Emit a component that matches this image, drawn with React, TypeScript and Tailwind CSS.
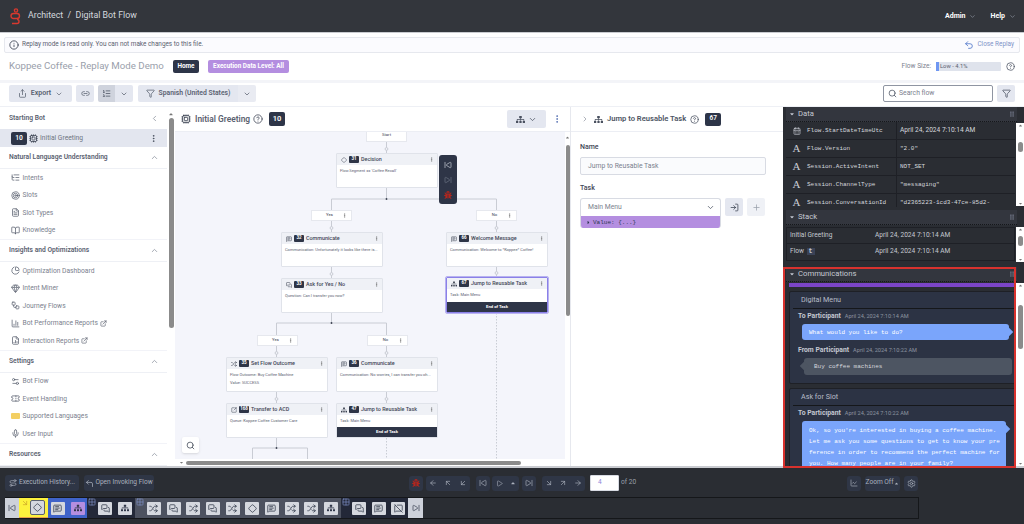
import type { ReactNode } from "react";
import {
  Info, Undo2, Share, Link2, ListOrdered, ChevronDown, ChevronUp, ChevronLeft, ChevronRight,
  Filter, Search, CircleHelp, Cpu, EllipsisVertical, ListTree, Target, FileText, BookOpen,
  ChartPie, Gem, Workflow, ChartColumn, FileChartColumn, Settings2, Ticket, Mic, ExternalLink,
  Diamond, MessageSquareText, MessagesSquare, Shuffle, SquareArrowOutUpRight, ArrowLeft,
  ArrowRight, ArrowUpLeft, ArrowDownLeft, ArrowDownRight, ArrowUpRight, SkipBack, SkipForward,
  Play, Settings, ChartLine, Plus, LogIn, CalendarDays, Grid2x2, CornerUpLeft, Route, MessageSquareOff,
} from "lucide-react";
import { FaSitemap, FaBug, FaCaretDown, FaCaretUp, FaCaretRight, FaGripVertical } from "react-icons/fa";

function Sitemap({ size = 10, className = "" }: { size?: number; className?: string }) {
  return <FaSitemap size={size} className={className} />;
}

function NavItem({ icon, label, ext }: { icon: ReactNode; label: string; ext?: boolean }) {
  return (
    <div className="h-[17.5px] flex items-center pl-[10px] text-[6.7px] text-[#7b818e]">
      <span className="w-[10px] flex justify-center text-[#5b6270]">{icon}</span>
      <span className="ml-[2.5px]">{label}</span>
      {ext && <ExternalLink size={7} className="ml-[2px] text-[#4a5160]" />}
    </div>
  );
}

function NavHead({ label }: { label: string }) {
  return (
    <div className="h-[22px] flex items-center justify-between pl-[9px] pr-[8px] text-[6.7px] font-semibold text-[#5a6170] border-b border-[#eef0f5]">
      {label}
      <ChevronUp size={9} className="text-[#8a909c]" />
    </div>
  );
}

function Sidebar() {
  return (
    <div className="w-[175px] bg-white flex shrink-0 overflow-hidden">
      <div className="w-[167px]">
        <div className="h-[22px] flex items-center justify-between pl-[9px] pr-[8px] text-[6.7px] font-semibold text-[#5a6170]">
          Starting Bot
          <ChevronLeft size={9} className="text-[#8a909c]" />
        </div>
        <div className="h-[18px] bg-[#e3e6ef] flex items-center pl-[11px] pr-[9px] text-[6.7px] text-[#6f7582]">
          <span className="bg-[#2d3548] text-white rounded-[2px] w-[16px] h-[13px] flex items-center justify-center font-semibold">10</span>
          <Cpu size={9} className="ml-[2px] text-[#3a4150]" />
          <span className="ml-[2px] flex-1">Initial Greeting</span>
          <EllipsisVertical size={9} className="text-[#3a4150]" />
        </div>
        <NavHead label="Natural Language Understanding" />
        <NavItem icon={<ListTree size={9} />} label="Intents" />
        <NavItem icon={<Target size={9} />} label="Slots" />
        <NavItem icon={<FileText size={9} />} label="Slot Types" />
        <NavItem icon={<BookOpen size={9} />} label="Knowledge" />
        <div className="h-[1px] bg-[#f2f3f8]" />
        <NavHead label="Insights and Optimizations" />
        <NavItem icon={<ChartPie size={9} />} label="Optimization Dashboard" />
        <NavItem icon={<Gem size={9} />} label="Intent Miner" />
        <NavItem icon={<Workflow size={9} />} label="Journey Flows" />
        <NavItem icon={<ChartColumn size={9} />} label="Bot Performance Reports" ext />
        <NavItem icon={<FileChartColumn size={9} />} label="Interaction Reports" ext />
        <div className="h-[1px] bg-[#f2f3f8]" />
        <NavHead label="Settings" />
        <NavItem icon={<Settings2 size={9} />} label="Bot Flow" />
        <NavItem icon={<Ticket size={9} />} label="Event Handling" />
        <NavItem icon={<span className="block w-[9px] h-[6px] bg-[#f3cf63] rounded-[1px]" />} label="Supported Languages" />
        <NavItem icon={<Mic size={9} />} label="User Input" />
        <div className="h-[1px] bg-[#f2f3f8]" />
        <NavHead label="Resources" />
      </div>
      <div className="w-[8px] flex flex-col items-center pt-[4px]">
        <FaCaretUp size={6} className="text-[#777]" />
        <div className="w-[5px] h-[210px] bg-[#8b8b8b] rounded-full mt-[1px]" />
      </div>
    </div>
  );
}

function Node({ pos, icon, num, title, lines, end, selected }: {
  pos: string; icon: ReactNode; num: string; title: string; lines: string[]; end?: boolean; selected?: boolean;
}) {
  return (
    <div className={`absolute ${pos} w-[102px] h-[35px] bg-white rounded-[1px] flex flex-col overflow-hidden ${selected ? "border border-[#8a80e8] outline outline-[#b8b2f0]" : "border border-[#e0e3ea]"}`}>
      <div className="h-[11px] shrink-0 bg-[#eff1f6] flex items-center px-[3px] text-[#3a4150]">
        <span className="w-[7px] flex justify-center">{icon}</span>
        <span className="ml-[2px] w-[10px] h-[7px] bg-[#2e3547] rounded-[1px] text-white text-[4.5px] font-bold flex items-center justify-center">{num}</span>
        <span className="ml-[2px] flex-1 text-[5.4px] font-medium text-[#3f4656]">{title}</span>
        <EllipsisVertical size={5} className="text-[#555]" />
      </div>
      <div className="flex-1 px-[3px] pt-[1.5px] text-[4px] leading-[8px] text-[#5a6170]">
        {lines.map((l) => <div key={l}>{l}</div>)}
      </div>
      {end && <div className="h-[10px] shrink-0 bg-[#2e3547] text-white text-[4.2px] font-bold flex items-center justify-center">End of Task</div>}
    </div>
  );
}

function Label({ pos, text, dots = true }: { pos: string; text: string; dots?: boolean }) {
  return (
    <div className={`absolute ${pos} w-[41px] h-[11px] bg-white border border-[#e6e8ee] flex items-center justify-center text-[4.2px] text-[#3a4150]`}>
      <span className={dots ? "-ml-[4px]" : ""}>{text}</span>
      {dots && <EllipsisVertical size={5} className="absolute right-[4px] text-[#555]" />}
    </div>
  );
}

function Connectors() {
  return (
    <svg className="absolute left-0 top-0" width="390" height="327" fill="none" stroke="#c9ccd4" strokeWidth="1">
      <path d="M211.5 10V21M211.5 56V67M156.5 100V67H321.5V100M156.5 134V146M321.5 134V145M156.5 180V191M101.5 225V191H211.5V225M101.5 259V271M211.5 259V271M101.5 305V316M77.5 327V316H132.5V327" />
      <path d="M321.5 181V327M211.5 306V327" strokeDasharray="1.5 1.5" />
      <g fill="#3a4150" stroke="none">
        <circle cx="211.5" cy="67" r="0.9" />
        <circle cx="156.5" cy="191" r="0.9" />
        <circle cx="101.5" cy="316" r="0.9" />
      </g>
      <g fill="#f4f5fb">
        <circle cx="211.5" cy="17" r="1.4" />
        <circle cx="156.5" cy="96" r="1.4" />
        <circle cx="321.5" cy="96" r="1.4" />
        <circle cx="156.5" cy="142" r="1.4" />
        <circle cx="321.5" cy="141" r="1.4" />
        <circle cx="101.5" cy="221" r="1.4" />
        <circle cx="211.5" cy="221" r="1.4" />
        <circle cx="101.5" cy="267" r="1.4" />
        <circle cx="211.5" cy="267" r="1.4" />
      </g>
    </svg>
  );
}

function Canvas() {
  return (
    <div className="w-[396px] shrink-0 flex flex-col border-r border-[#e6e8ee]">
      <div className="h-[25px] bg-white flex items-center pl-[6px] pr-[8px] shrink-0 border-b border-[#eceef4]">
        <Cpu size={10} className="text-[#3a4150]" />
        <span className="ml-[4px] text-[8.4px] font-semibold text-[#5a6170]">Initial Greeting</span>
        <CircleHelp size={10} className="ml-[3px] text-[#4a5160]" />
        <span className="ml-[6px] bg-[#2d3548] text-white rounded-[2px] w-[16px] h-[14px] flex items-center justify-center text-[7.5px] font-semibold">10</span>
        <div className="ml-auto w-[39px] h-[18px] bg-[#e4e7f0] rounded-[2px] flex items-center justify-center gap-[3px] text-[#4a5160]">
          <Sitemap size={9} />
          <ChevronDown size={9} />
        </div>
        <EllipsisVertical size={10} className="ml-[6px] text-[#4f6bb0]" />
      </div>
      <div className="flex-1 flex min-h-0">
        <div className="relative w-[390px] bg-[#f4f5fb] overflow-hidden">
          <Connectors />
          <Label pos="left-[191px] -top-[4px] h-[14px]" text="Start" dots={false} />
          <Node pos="left-[161px] top-[21px]" icon={<Diamond size={6} />} num="31" title="Decision" lines={["Flow.Segment == 'Coffee Recall'"]} />
          <Label pos="left-[136px] top-[78px]" text="Yes" />
          <Label pos="left-[301px] top-[78px]" text="No" />
          <Node pos="left-[106px] top-[100px]" icon={<MessageSquareText size={6} />} num="32" title="Communicate" lines={["Communication: Unfortunately it looks like there is..."]} />
          <Node pos="left-[106px] top-[146px]" icon={<MessagesSquare size={6} />} num="33" title="Ask for Yes / No" lines={["Question: Can I transfer you now?"]} />
          <Node pos="left-[271px] top-[100px]" icon={<MessageSquareText size={6} />} num="66" title="Welcome Message" lines={["Communication: Welcome to *Koppee* Coffee!"]} />
          <Node pos="left-[271px] top-[145px] h-[36px]" icon={<Sitemap size={6} />} num="67" title="Jump to Reusable Task" lines={["Task: Main Menu"]} end selected />
          <Label pos="left-[82px] top-[203px]" text="Yes" />
          <Label pos="left-[192px] top-[203px]" text="No" />
          <Node pos="left-[51px] top-[225px]" icon={<Shuffle size={6} />} num="35" title="Set Flow Outcome" lines={["Flow Outcome: Buy Coffee Machine", "Value: SUCCESS"]} />
          <Node pos="left-[161px] top-[225px]" icon={<MessageSquareText size={6} />} num="36" title="Communicate" lines={["Communication: No worries, I can transfer you oh..."]} />
          <Node pos="left-[51px] top-[271px]" icon={<SquareArrowOutUpRight size={6} />} num="168" title="Transfer to ACD" lines={["Queue: Koppee Coffee Customer Care"]} />
          <Node pos="left-[161px] top-[271px]" icon={<Sitemap size={6} />} num="47" title="Jump to Reusable Task" lines={["Task: Main Menu"]} end />
          <div className="absolute left-[264px] top-[23px] w-[18px] h-[49px] bg-[#2e3547] rounded-[3px] flex flex-col items-center justify-around py-[2px]">
            <SkipBack size={8} className="text-[#cfd3dc]" />
            <SkipForward size={8} className="text-[#6e7686]" />
            <FaBug size={8} className="text-[#b3261e]" />
          </div>
          <div className="absolute left-[7px] top-[305px] w-[17px] h-[16px] bg-white rounded-[2px] shadow flex items-center justify-center">
            <Search size={9} className="text-[#3a4150]" />
          </div>
        </div>
        <div className="w-[5px] flex flex-col items-center pt-[3px]">
          <FaCaretUp size={5} className="text-[#777]" />
          <div className="w-[4px] h-[171px] bg-[#8b8b8b] rounded-full mt-[5px]" />
        </div>
      </div>
      <div className="h-[7px] bg-white shrink-0 flex items-center pl-[4px]">
        <FaCaretDown size={5} className="text-[#777]" />
        <div className="w-[335px] h-[4px] bg-[#8b8b8b] rounded-full ml-[2px]" />
      </div>
    </div>
  );
}

function Props() {
  return (
    <div className="w-[212px] shrink-0 bg-white flex flex-col">
      <div className="h-[25px] flex items-center pl-[10px] border-b border-[#eceef4] text-[#4a5160]">
        <ChevronRight size={8} className="text-[#8a909c]" />
        <Sitemap size={9} className="ml-[5px]" />
        <span className="ml-[4px] text-[7.6px] font-semibold text-[#4d5463]">Jump to Reusable Task</span>
        <CircleHelp size={9} className="ml-[4px]" />
        <span className="ml-[6px] bg-[#2d3548] text-white rounded-[2px] w-[16px] h-[13px] flex items-center justify-center text-[6.5px] font-semibold">67</span>
      </div>
      <div className="pl-[9px] pt-[10px] pr-[17px]">
        <div className="text-[7px] font-medium text-[#3f4656] leading-[10px]">Name</div>
        <div className="mt-[5px] h-[18px] border border-[#d8dbe3] rounded-[2px] bg-[#fafbfd] flex items-center pl-[7px] text-[6.8px] text-[#7b818e]">Jump to Reusable Task</div>
        <div className="mt-[8px] text-[7px] font-medium text-[#3f4656] leading-[10px]">Task</div>
        <div className="mt-[5px] flex items-start gap-[4px]">
          <div className="w-[141px] rounded-[3px] overflow-hidden border-t border-x border-[#d8dbe3]">
            <div className="h-[17px] flex items-center justify-between pl-[7px] pr-[5px] text-[6.8px] text-[#7b818e]">
              Main Menu
              <ChevronDown size={9} className="text-[#4a5160]" />
            </div>
            <div className="h-[12px] bg-[#b48ee0] flex items-center pl-[5px] gap-[2px] font-['Liberation_Mono',monospace] text-[6px] text-[#2b3650]">
              <FaCaretRight size={5} />
              Value: {"{...}"}
            </div>
          </div>
          <div className="w-[18px] h-[18px] bg-[#e4e7f0] rounded-[2px] flex items-center justify-center text-[#3a4150]"><LogIn size={9} /></div>
          <div className="w-[18px] h-[18px] bg-[#eff1f6] rounded-[2px] flex items-center justify-center text-[#9aa0ab]"><Plus size={9} /></div>
        </div>
      </div>
    </div>
  );
}

function MiniScroll({ h, top, thumb }: { h: string; top: string; thumb: string }) {
  return (
    <div className={`absolute right-0 ${h} w-[8px] bg-white flex flex-col items-center justify-between`}>
      <FaCaretUp size={5} className="text-[#777]" />
      <div className={`absolute ${top} ${thumb} w-[5px] bg-[#8b8b8b] rounded-full`} />
      <FaCaretDown size={5} className="text-[#777]" />
    </div>
  );
}

function PanelHead({ title }: { title: string }) {
  return (
    <div className="h-[15px] bg-[#33363e] flex items-center pl-[3px] text-[7.7px] text-[#c5c9d2] border-b border-dotted border-[#15171a]">
      <FaCaretDown size={6} className="mr-[3px]" />
      {title}
      <FaGripVertical size={6} className="ml-auto mr-[2px] text-[#6b7080]" />
    </div>
  );
}

function DataRow({ icon, name, value, sans }: { icon: ReactNode; name: string; value: string; sans?: boolean }) {
  return (
    <div className="h-[18px] flex items-center border-b border-[#1e2026] text-[#d5d8de] font-['Liberation_Mono',monospace] text-[6px]">
      <span className="w-[21px] flex justify-center">{icon}</span>
      <span className="w-[90px] border-r border-[#1e2026] h-full flex items-center">{name}</span>
      <span className={`ml-[3px] ${sans ? "font-['Roboto',sans-serif] text-[6.6px]" : ""}`}>{value}</span>
    </div>
  );
}

function LetterA() {
  return <span className="font-['Liberation_Serif',serif] text-[11px] text-[#c8ccd4] font-normal">A</span>;
}

function Bubble({ children, h, from }: { children: ReactNode; h: string; from?: boolean }) {
  return (
    <div className={`relative ${h} font-['Liberation_Mono',monospace] text-[6px] leading-[11px] flex items-center rounded-[3px] ${from ? "bg-[#4d5562] text-[#d5d8de] ml-[14px] mr-[3px] pl-[10px]" : "bg-[#7aa5fb] text-white ml-[12px] mr-[6px] pl-[7px]"}`}>
      <div>{children}</div>
      {from
        ? <span className="absolute -left-[3px] top-[5px] w-[6px] h-[6px] rotate-45 bg-[#4d5562]" />
        : <span className="absolute -right-[3px] top-[5px] w-[6px] h-[6px] rotate-45 bg-[#7aa5fb]" />}
    </div>
  );
}

function MsgHead({ who, time }: { who: string; time: string }) {
  return (
    <div className="h-[15px] pl-[8px] flex items-center gap-[4px]">
      <span className="text-[6.8px] font-bold text-[#c5c9d2]">{who}</span>
      <span className="text-[5.6px] text-[#8d93a0]">{time}</span>
    </div>
  );
}

function RightPanel() {
  return (
    <div className="flex-1 bg-[#2a2d33] flex flex-col relative overflow-hidden pl-[3px]">
      <div className="h-[101px] relative shrink-0">
        <div className="pr-[7px]"><PanelHead title="Data" /></div>
        <div className="pr-[9px] h-[85px] overflow-hidden">
          <DataRow icon={<CalendarDays size={8} className="text-[#c8ccd4]" />} name="Flow.StartDateTimeUtc" value="April 24, 2024 7:10:14 AM" sans />
          <DataRow icon={<LetterA />} name="Flow.Version" value={'"2.0"'} />
          <DataRow icon={<LetterA />} name="Session.ActiveIntent" value="NOT_SET" />
          <DataRow icon={<LetterA />} name="Session.ChannelType" value={'"messaging"'} />
          <DataRow icon={<LetterA />} name="Session.ConversationId" value={'"d2365223-1cd3-47ce-85d2-'} />
        </div>
        <MiniScroll h="top-[16px] h-[83px]" top="top-[19px]" thumb="h-[10px]" />
      </div>
      <div className="h-[56px] relative shrink-0 mt-[2px]">
        <div className="pr-[7px]"><PanelHead title="Stack" /></div>
        <div className="pr-[9px] mt-[2px] text-[6.6px] text-[#c5c9d2]">
          <div className="h-[17px] flex items-center border border-[#1e2026]">
            <span className="w-[88px] pl-[3px]">Initial Greeting</span>
            <span>April 24, 2024 7:10:14 AM</span>
          </div>
          <div className="h-[17px] flex items-center border-x border-b border-[#1e2026]">
            <span className="w-[88px] pl-[3px]">Flow <span className="bg-[#3a4256] px-[2px] ml-[1px] font-['Liberation_Mono',monospace] font-bold">t</span></span>
            <span>April 24, 2024 7:10:14 AM</span>
          </div>
        </div>
        <MiniScroll h="top-[17px] h-[35px]" top="top-[9px]" thumb="h-[10px]" />
      </div>
      <div className="flex-1 relative mt-[1px] min-h-0">
        <div className="pr-[7px]"><PanelHead title="Communications" /></div>
        <div className="ml-[3px] mr-[8px] mt-[1px] h-[4px] bg-[#7b45c7]" />
        <div className="ml-[3px] mr-[8px] mt-[4px] flex flex-col gap-[4px] overflow-hidden h-[200px]">
          <div className="h-[93px] bg-[#2c3344] border border-[#1e2026] rounded-[2px] shrink-0">
            <div className="h-[17px] ml-[3px] pl-[8px] flex items-center text-[7.2px] text-[#b8bdc8] border-b border-[#15171a]">Digital Menu</div>
            <MsgHead who="To Participant" time="April 24, 2024 7:10:14 AM" />
            <Bubble h="h-[16px]">What would you like to do?</Bubble>
            <div className="mt-[3px]"><MsgHead who="From Participant" time="April 24, 2024 7:10:22 AM" /></div>
            <Bubble h="h-[17px]" from>Buy coffee machines</Bubble>
          </div>
          <div className="h-[93px] bg-[#2c3344] border border-[#1e2026] rounded-[2px] shrink-0">
            <div className="h-[17px] ml-[3px] pl-[8px] flex items-center text-[7.2px] text-[#b8bdc8] border-b border-[#15171a]">Ask for Slot</div>
            <MsgHead who="To Participant" time="April 24, 2024 7:10:22 AM" />
            <Bubble h="h-[52px] mr-[9px]">
              Ok, so you're interested in buying a coffee machine.<br />
              Let me ask you some questions to get to know your pre<br />
              ference in order to recommend the perfect machine for<br />
              you. How many people are in your family?
            </Bubble>
          </div>
        </div>
        <MiniScroll h="top-[16px] bottom-0" top="top-[22px]" thumb="h-[44px]" />
      </div>
    </div>
  );
}

function Cell({ active, children }: { active?: boolean; children: ReactNode }) {
  return (
    <div className={`w-[14px] h-[13px] shrink-0 rounded-[1px] flex items-center justify-center text-[#2e3547] ${active ? "bg-[#b48ee0]" : "bg-[#d5d8df]"}`}>
      {children}
    </div>
  );
}

const msg = <MessageSquareText size={9} />;
const ask = <MessagesSquare size={9} />;
const mix = <Shuffle size={9} />;
const task = <Sitemap size={8} />;

function Timeline() {
  return (
    <div className="ml-[5px] w-[914px] h-[22px] flex border border-[#15171a] border-l-0">
      <div className="w-[14px] bg-[#cdd1da] flex items-center justify-center text-[#2e3547]"><SkipBack size={8} /></div>
      <div className="w-[29px] bg-[#fdf23d] border-b border-[#e8a14b] relative flex items-center justify-end pr-[3px]">
        <ArrowDownRight size={8} className="absolute left-[2px] top-[1px] text-[#c9a227]" />
        <div className="w-[15px] h-[15px] bg-[#d5d8df] border border-[#5b6270] rounded-[2px] flex items-center justify-center text-[#2e3547]"><Diamond size={9} /></div>
      </div>
      <div className="w-[39px] bg-[#3f63c9] flex items-center justify-center gap-[6px]">
        <Cell>{msg}</Cell>
        <Cell active>{task}</Cell>
      </div>
      <div className="w-[48px] bg-[#232838] relative flex items-center justify-end gap-[6px] pr-[3px]">
        <Grid2x2 size={8} className="absolute left-[1px] top-[0px] text-[#7f93c8]" />
        <Cell>{ask}</Cell>
        <Cell>{task}</Cell>
      </div>
      <div className="w-[206px] bg-[#4d5260] relative flex items-center justify-end gap-[5.7px] pr-[3px]">
        <Grid2x2 size={8} className="absolute left-[1px] top-[0px] text-[#7f93c8]" />
        <Cell>{mix}</Cell>
        <Cell>{ask}</Cell>
        <Cell>{mix}</Cell>
        <Cell>{ask}</Cell>
        <Cell>{mix}</Cell>
        <Cell><Diamond size={9} /></Cell>
        <Cell>{msg}</Cell>
        <Cell>{mix}</Cell>
        <Cell>{mix}</Cell>
        <Cell>{task}</Cell>
      </div>
      <div className="w-[67px] bg-[#232838] relative flex items-center justify-end gap-[5.5px] pr-[3px]">
        <Grid2x2 size={8} className="absolute left-[1px] top-[0px] text-[#7f93c8]" />
        <Cell>{ask}</Cell>
        <Cell>{msg}</Cell>
        <Cell><MessageSquareOff size={9} /></Cell>
      </div>
      <div className="w-[15px] bg-[#cdd1da] flex items-center justify-center text-[#2e3547]"><SkipForward size={8} /></div>
    </div>
  );
}

function CtrlGroup({ children, w }: { children: ReactNode; w: string }) {
  return <div className={`${w} h-[15px] bg-[#2f3646] rounded-[3px] flex items-center justify-around text-[#aab0bc] shrink-0`}>{children}</div>;
}

function Bottom() {
  return (
    <div className="h-[58px] shrink-0 bg-[#2a2d33] border-t-2 border-[#c9cbd0] pt-[7px]">
      <div className="h-[16px] flex items-center">
        <div className="ml-[5px] w-[74px] h-[16px] shrink-0 bg-[#2f3646] rounded-[3px] flex items-center justify-center gap-[2px] text-[6.6px] text-[#aab0bc] whitespace-nowrap">
          <Route size={8} />Execution History...
        </div>
        <div className="ml-[5px] w-[70px] h-[16px] shrink-0 bg-[#2f3646] rounded-[3px] flex items-center justify-center gap-[1px] text-[6.6px] text-[#aab0bc] whitespace-nowrap">
          <CornerUpLeft size={9} />Open Invoking Flow
        </div>
        <div className="ml-[255px]"><CtrlGroup w="w-[14px]"><FaBug size={8} className="text-[#b3261e]" /></CtrlGroup></div>
        <div className="ml-[3px]">
          <CtrlGroup w="w-[44px]"><ArrowLeft size={8} /><ArrowUpLeft size={8} /><ArrowDownLeft size={8} /></CtrlGroup>
        </div>
        <div className="ml-[6px]"><CtrlGroup w="w-[14px]"><SkipBack size={8} /></CtrlGroup></div>
        <div className="ml-[2px]"><CtrlGroup w="w-[27px]"><Play size={7} /><FaCaretUp size={6} /></CtrlGroup></div>
        <div className="ml-[3px]"><CtrlGroup w="w-[14px]"><SkipForward size={8} /></CtrlGroup></div>
        <div className="ml-[6px]">
          <CtrlGroup w="w-[43px]"><ArrowDownRight size={8} /><ArrowUpRight size={8} /><ArrowRight size={8} /></CtrlGroup>
        </div>
        <div className="ml-[5px] w-[29px] h-[16px] bg-white border border-[#d8dbe3] rounded-[1px] flex items-center pl-[7px] text-[6.5px] text-[#8c86d8]">4</div>
        <span className="ml-[2px] w-[13px] whitespace-nowrap text-[6.6px] text-[#9aa0ab]">of 20</span>
        <div className="ml-[213px]"><CtrlGroup w="w-[14px]"><ChartLine size={8} /></CtrlGroup></div>
        <div className="ml-[4px]"><CtrlGroup w="w-[35px]"><span className="text-[6.6px]">Zoom Off</span><FaCaretUp size={5} /></CtrlGroup></div>
        <div className="ml-[4px]"><CtrlGroup w="w-[14px]"><Settings size={9} /></CtrlGroup></div>
      </div>
      <div className="mt-[6px]"><Timeline /></div>
    </div>
  );
}

function ToolBtn({ children, w }: { children: ReactNode; w: string }) {
  return <div className={`${w} h-[17px] bg-[#e4e7f0] rounded-[2px] flex items-center justify-center gap-[4px] text-[7px] text-[#5a6170] font-semibold shrink-0`}>{children}</div>;
}

export default function App() {
  return (
    <div className="relative w-[1024px] h-[524px] overflow-hidden bg-white flex flex-col font-['Roboto',sans-serif]">
      <div className="h-[33px] shrink-0 bg-[#33363c] border-b border-[#c9cbd0] flex items-center pl-[10px] pr-[8px] text-white">
        <svg width="11" height="17" viewBox="0 0 11 17" fill="none" stroke="#d8392f" strokeWidth="1.4">
          <circle cx="6" cy="2.5" r="1.6" />
          <rect x="1" y="5.5" width="8.5" height="5" rx="2.5" />
          <path d="M2 15.5h5a2 2 0 0 0 0-4" />
        </svg>
        <span className="ml-[7px] text-[8.8px] text-[#d5d8de]">Architect&nbsp;&nbsp;/&nbsp;&nbsp;Digital Bot Flow</span>
        <span className="ml-auto text-[7px] font-bold">Admin</span>
        <ChevronDown size={7} className="ml-[4px] text-[#9aa0ab]" />
        <span className="ml-[14px] text-[7px] font-bold">Help</span>
        <ChevronDown size={7} className="ml-[4px] text-[#9aa0ab]" />
      </div>
      <div className="mx-[4px] mt-[4px] h-[16px] shrink-0 bg-[#fbfbfe] border border-[#e6e8ee] rounded-[2px] flex items-center pl-[4px] pr-[5px] text-[6.4px] text-[#5a6170]">
        <Info size={10} className="text-[#3a4150]" />
        <span className="ml-[3px]">Replay mode is read only. You can not make changes to this file.</span>
        <Undo2 size={10} className="ml-auto text-[#4f76c9]" />
        <span className="ml-[3px] text-[#7f93c8]">Close Replay</span>
      </div>
      <div className="h-[30px] shrink-0 flex items-center pl-[9px] pr-[9px] border-b-[3px] border-[#f3f4f8]">
        <span className="text-[9.7px] text-[#9aa0ab] w-[155px] whitespace-nowrap">Koppee Coffee - Replay Mode Demo</span>
        <span className="ml-[9px] w-[26px] h-[13px] bg-[#2d3548] rounded-[2px] text-white text-[6.4px] font-bold flex items-center justify-center">Home</span>
        <span className="ml-[9px] w-[81px] h-[13px] bg-[#b48ee0] rounded-[2px] text-white text-[6.4px] font-bold flex items-center justify-center">Execution Data Level: All</span>
        <span className="ml-auto text-[6.6px] text-[#7b818e]">Flow Size:</span>
        <div className="ml-[5px] w-[65px] h-[9px] bg-[#dfe3ec] rounded-[1px] flex items-center text-[5.8px] text-[#5a6170]">
          <span className="w-[3px] h-full bg-[#6f97f2] mr-[1px]" />Low - 4.1%
        </div>
        <CircleHelp size={9} className="ml-[5px] text-[#4a5160]" />
      </div>
      <div className="h-[23px] shrink-0 flex items-center pl-[9px] pr-[9px] gap-[4px] pb-[2px]">
        <ToolBtn w="w-[63px]"><Share size={9} />Export<ChevronDown size={8} /></ToolBtn>
        <ToolBtn w="w-[18px]"><Link2 size={9} /></ToolBtn>
        <div className="flex rounded-[2px] overflow-hidden shrink-0">
          <div className="w-[17px] h-[17px] bg-[#cfd3dd] flex items-center justify-center text-[#4a5160]"><ListOrdered size={9} /></div>
          <div className="w-[18px] h-[17px] bg-[#e4e7f0] flex items-center justify-center text-[#4a5160]"><ChevronDown size={8} /></div>
        </div>
        <div className="flex rounded-[2px] overflow-hidden shrink-0 ml-[1px]">
          <div className="w-[100px] h-[17px] bg-[#e4e7f0] flex items-center justify-center gap-[4px] text-[6.8px] font-semibold text-[#5a6170]"><Filter size={9} />Spanish (United States)</div>
          <div className="w-[18px] h-[17px] bg-[#e9ebf2] flex items-center justify-center text-[#4a5160]"><ChevronDown size={8} /></div>
        </div>
        <div className="ml-auto w-[110px] h-[17px] border border-[#8f95a2] rounded-[2px] flex items-center pl-[4px] text-[6.8px] text-[#7b818e]">
          <Search size={9} className="text-[#4a5160] mr-[2px]" />Search flow
        </div>
        <div className="w-[18px] h-[17px] bg-[#e4e7f0] rounded-[2px] flex items-center justify-center text-[#4a5160]"><Filter size={9} /></div>
      </div>
      <div className="flex-1 flex min-h-0 border-t border-[#eef0f5]">
        <Sidebar />
        <Canvas />
        <Props />
        <RightPanel />
      </div>
      <Bottom />
      <div className="absolute left-[783px] top-[267px] w-[233px] h-[201px] border-2 border-[#d8322e] pointer-events-none" />
    </div>
  );
}
